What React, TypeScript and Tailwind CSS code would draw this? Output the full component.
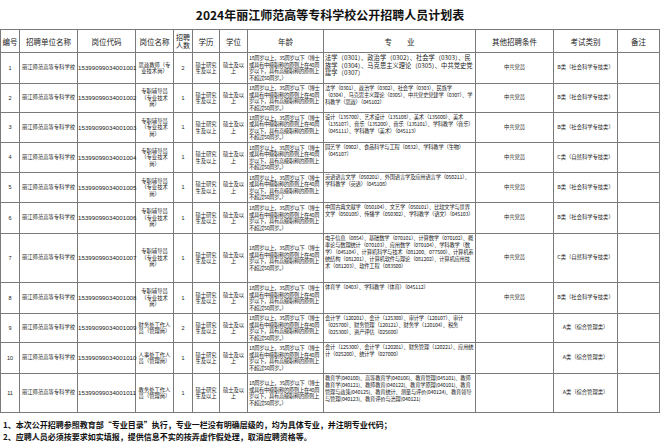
import React from "react";

const AGE = "18周岁以上，35周岁以下（博士或具有中级职称的原则上在40周岁以下，具有高级职称的原则上不超过50周岁。）";
const SCHOOL = "丽江师范高等专科学校";
const FD = "专职辅导员（专业技术岗）";
const B = "B类（社会科学专技类）";
const C = "C类（自然科学专技类）";
const A = "A类（综合管理类）";

type Row = { h: number; code: string; name: string; n: string; major: string; other: string; exam: string; big?: boolean };

const rows: Row[] = [
  { h: 31, code: "15399099034001001", name: "思政教师（专业技术岗）", n: "2", major: "法学（0301）、政治学（0302）、社会学（0303）、民族学（0304）、马克思主义理论（0305）、中共党史党建学（0307）", other: "中共党员", exam: B, big: true },
  { h: 29, code: "15399099034001002", name: FD, n: "1", major: "法学（0301）、政治学（0302）、社会学（0303）、民族学（0304）、马克思主义理论（0305）、中共党史党建学（0307）、学科教学（思政）（045102）", other: "中共党员", exam: B },
  { h: 30, code: "15399099034001003", name: FD, n: "1", major: "设计（135700）、艺术设计（135108）、美术（135600）、美术（135107）、音乐（135200）、音乐（135101）、学科教学（音乐）（045111）、学科教学（美术）（045113）", other: "中共党员", exam: B },
  { h: 30, code: "15399099034001004", name: FD, n: "1", major: "园艺学（0902）、食品科学与工程（0832）、学科教学（生物）（045107）", other: "中共党员", exam: C },
  { h: 30, code: "15399099034001005", name: FD, n: "1", major: "英语语言文学（050201）、外国语言学及应用语言学（050211）、学科教学（英语）（045108）", other: "中共党员", exam: B },
  { h: 31, code: "15399099034001006", name: FD, n: "1", major: "中国古典文献学（050104）、文艺学（050101）、比较文学与世界文学（050108）、传播学（050302）、学科教学（语文）（045103）", other: "中共党员", exam: B },
  { h: 49, code: "15399099034001007", name: FD, n: "1", major: "电子信息（0854）、基础数学（070101）、计算数学（070102）、概率论与数理统计（070103）、应用数学（070104）、学科教学（数学）（045104）、计算机科学与技术（081200、077500）、计算机系统结构（081201）、计算机软件与理论（081202）、计算机应用技术（081203）、软件工程（083500）", other: "中共党员", exam: C },
  { h: 31, code: "15399099034001008", name: FD, n: "1", major: "体育学（0403）、学科教学（体育）（045112）", other: "中共党员", exam: B },
  { h: 29, code: "15399099034001009", name: "财务处工作人员（管理岗）", n: "2", major: "会计学（120201）、会计（125300）、审计学（120107）、审计（025700）、财务管理（120121）、财务学（120104）、税务（025300）、资产评估（025600）", other: "", exam: A },
  { h: 31, code: "15399099034001010", name: "人事处工作人员（管理岗）", n: "1", major: "会计（125300）、会计学（120201）、财务管理（120221）、应用统计（025200）、统计学（027000）", other: "", exam: A },
  { h: 39, code: "15399099034001011", name: "教务处工作人员（管理岗）", n: "1", major: "教育学(040100)、高等教育学(040106)、教育管理(045101)、教师教育学(040121)、教师教育(040122)、教育学原理(040101)、教育管理与政策(040125)、教育统计、测量与评价(040124)、教育领导与管理(040123)、教育评价与治理(040121)", other: "", exam: A },
];

const widths = [19, 58, 58, 38, 19, 27, 28, 76, 152, 78, 64, 42];
const heads = ["编号", "招聘单位名称", "岗位代码", "岗位名称", "招聘人数", "学历", "学位", "年龄", "专　　业", "其他招聘条件", "考试类别", "备注"];

const cjk = { fontFamily: '"Noto Sans CJK SC", sans-serif' };
const mono = { fontFamily: '"Liberation Sans", "Noto Sans CJK SC", sans-serif' };

export default function App() {
  return (
    <div className="w-[660px] h-[445px] bg-white text-[#222] overflow-hidden" style={cjk}>
      <div className="h-[29px] flex items-center justify-center text-[12px] font-bold text-[#111]">
        2024年丽江师范高等专科学校公开招聘人员计划表
      </div>
      <table className="table-fixed border-collapse w-[659px]">
        <colgroup>
          {widths.map((w, i) => (
            <col key={i} style={{ width: w }} />
          ))}
        </colgroup>
        <thead>
          <tr className="h-[23px]">
            {heads.map((h, i) => (
              <th
                key={i}
                className={`border border-[#7a7a7a] p-0 font-normal text-[#222] ${i === 4 ? "text-[7px] leading-[8px]" : "text-[7.5px] leading-[9px]"}`}
              >
                {h}
              </th>
            ))}
          </tr>
        </thead>
        <tbody>
          {rows.map((r, i) => (
            <tr key={i} style={{ height: r.h }}>
              <td className="border border-[#7a7a7a] p-0 text-center text-[5.5px]" style={mono}>{i + 1}</td>
              <td className="border border-[#7a7a7a] p-0 text-center text-[5.3px] whitespace-nowrap">{SCHOOL}</td>
              <td className="border border-[#7a7a7a] p-0 text-center text-[6.2px] whitespace-nowrap" style={mono}>{r.code}</td>
              <td className="border border-[#7a7a7a] px-[2px] py-0 text-center text-[5.3px] leading-[6.5px]">{r.name}</td>
              <td className="border border-[#7a7a7a] p-0 text-center text-[5.5px]" style={mono}>{r.n}</td>
              <td className="border border-[#7a7a7a] px-[1px] py-0 text-center text-[5.3px] leading-[6.5px]">硕士研究生及以上</td>
              <td className="border border-[#7a7a7a] px-[1px] py-0 text-center text-[5.3px] leading-[6.5px]">硕士及以上</td>
              <td className="border border-[#7a7a7a] px-[1px] py-0 text-left text-[5.3px] leading-[6.5px] tracking-[-0.3px]">{AGE}</td>
              <td className={`border border-[#7a7a7a] px-[1px] py-0 text-left align-top pt-[1px] ${r.big ? "text-[6.3px] leading-[7.5px]" : "text-[5.3px] leading-[7px] tracking-[-0.2px]"}`}>{r.major}</td>
              <td className="border border-[#7a7a7a] p-0 text-center text-[5.3px]">{r.other}</td>
              <td className="border border-[#7a7a7a] p-0 text-center text-[5.3px] whitespace-nowrap">{r.exam}</td>
              <td className="border border-[#7a7a7a] p-0"></td>
            </tr>
          ))}
        </tbody>
      </table>
      <div className="mt-[6px] pl-[3px] text-[8px] leading-[12px] font-bold text-[#111] whitespace-nowrap">
        <div>1、本次公开招聘参照教育部“专业目录”执行，专业一栏没有明确层级的，均为具体专业，并注明专业代码；</div>
        <div>2、应聘人员必须按要求如实填报，提供信息不实的按弄虚作假处理，取消应聘资格等。</div>
      </div>
    </div>
  );
}
